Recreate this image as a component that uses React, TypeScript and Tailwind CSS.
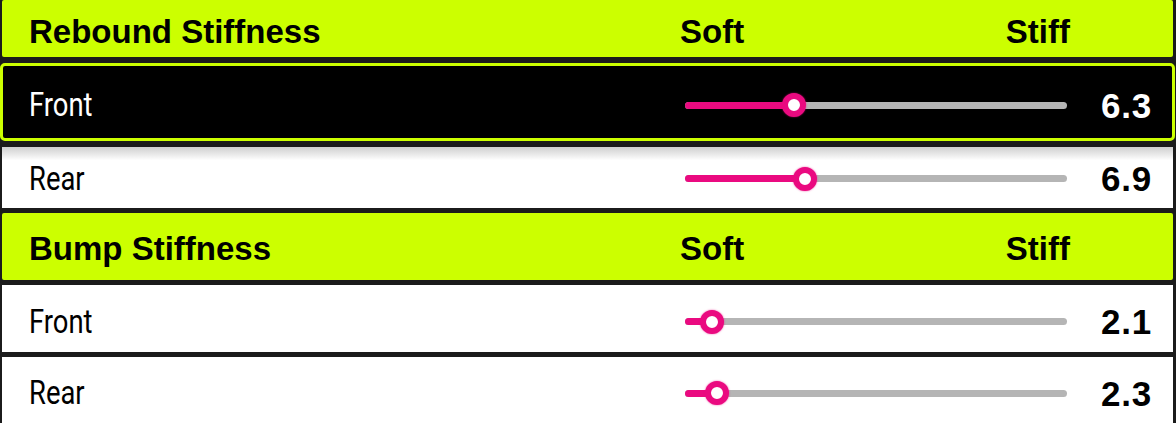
import React from "react";

type Row = { label: string; value: string; offset: number; selected?: boolean; shade?: boolean };

const LIME = "bg-[#ccff00]";

function Slider({ offset }: { offset: number }) {
  return (
    <div className="relative w-[382px] h-[7px] rounded-full bg-[#b5b5b5]">
      <div className="absolute left-0 top-0 h-full rounded-full bg-[#ea0a80]" style={{ width: offset }} />
      <div
        className="absolute top-1/2 size-[24px] -translate-x-1/2 -translate-y-1/2 rounded-full border-[6px] border-[#ea0a80] bg-white shadow-[0_0_2px_rgba(234,10,128,0.7)]"
        style={{ left: offset }}
      />
    </div>
  );
}

function Header({ title, h, pad }: { title: string; h: string; pad: string }) {
  return (
    <div
      className={`${h} ${pad} ml-[2px] mr-[3px] ${LIME} flex items-center rounded-[2px] text-black font-bold text-[33px] font-['Liberation_Sans',Arial,sans-serif]`}
    >
      <div className="flex-1 pl-[27px]">{title}</div>
      <div className="w-[390px] flex justify-between">
        <span>Soft</span>
        <span>Stiff</span>
      </div>
      <div className="w-[103px]" />
    </div>
  );
}

function Label({ text, pad }: { text: string; pad: string }) {
  return (
    <div className={`flex-1 ${pad}`}>
      <span className="inline-block origin-left scale-x-[0.83] text-[33px] leading-none font-['Roboto',sans-serif]">{text}</span>
    </div>
  );
}

function Value({ text }: { text: string }) {
  return (
    <div className="w-[85px] text-right text-[35px] leading-none font-bold tracking-[0.8px] font-['Liberation_Sans',Arial,sans-serif]">
      {text}
    </div>
  );
}

function SettingRow({ row, h, pad }: { row: Row; h: string; pad: string }) {
  if (row.selected) {
    return (
      <div className={`${h} ${pad} mr-[1px] border-[3px] border-[#ccff00] rounded-[5px] bg-black text-white flex items-center`}>
        <Label text={row.label} pad="pl-[26px]" />
        <Slider offset={row.offset} />
        <Value text={row.value} />
        <div className="w-[20px]" />
      </div>
    );
  }
  return (
    <div
      className={`${h} ${pad} ml-[2px] mr-[3px] flex items-center text-black ${
        row.shade ? "bg-gradient-to-b from-[#cfcfcf] via-white via-[22%] to-white" : "bg-white"
      }`}
    >
      <Label text={row.label} pad="pl-[27px]" />
      <Slider offset={row.offset} />
      <Value text={row.value} />
      <div className="w-[21px]" />
    </div>
  );
}

export default function App() {
  return (
    <div className="w-[1176px] h-[423px] overflow-hidden bg-[#1b1b1b] flex flex-col">
      <Header title="Rebound Stiffness" h="h-[57px] shrink-0" pad="pt-[7px]" />
      <div className="h-[6px] shrink-0" />
      <SettingRow row={{ label: "Front", value: "6.3", offset: 109, selected: true }} h="h-[78px] shrink-0" pad="pt-[6px]" />
      <div className="h-[6px] shrink-0" />
      <SettingRow row={{ label: "Rear", value: "6.9", offset: 120, shade: true }} h="h-[61px] shrink-0" pad="pt-[2px]" />
      <div className="h-[5px] shrink-0" />
      <Header title="Bump Stiffness" h="h-[67px] shrink-0" pad="pt-[4px]" />
      <div className="h-[5px] shrink-0" />
      <SettingRow row={{ label: "Front", value: "2.1", offset: 27 }} h="h-[67px] shrink-0" pad="pt-[6px]" />
      <div className="h-[5px] shrink-0" />
      <SettingRow row={{ label: "Rear", value: "2.3", offset: 32 }} h="h-[66px] shrink-0" pad="pt-[6px]" />
    </div>
  );
}
